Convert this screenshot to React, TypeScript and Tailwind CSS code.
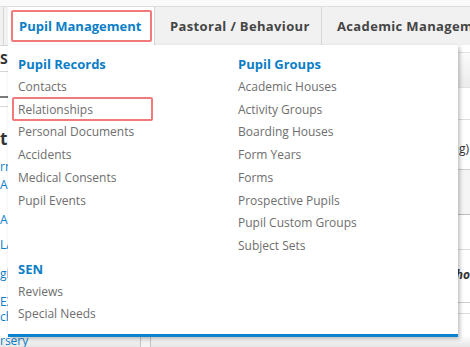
import React from "react";

const recordsMenu = [
  {
    title: "Pupil Records",
    items: ["Contacts", "Relationships", "Personal Documents", "Accidents", "Medical Consents", "Pupil Events"],
  },
  {
    title: "Pupil Groups",
    items: [
      "Academic Houses",
      "Activity Groups",
      "Boarding Houses",
      "Form Years",
      "Forms",
      "Prospective Pupils",
      "Pupil Custom Groups",
      "Subject Sets",
    ],
  },
  { title: "SEN", items: ["Reviews", "Special Needs"] },
];

export default function App() {
  return (
    <div className="relative w-[470px] h-[347px] overflow-hidden bg-white font-['Open_Sans',sans-serif]">
      {/* top strip */}
      <div className="h-[7px] bg-[#fafafa] border-b border-[#dedede]" />

      {/* tab bar */}
      <div className="flex h-[38px] bg-[#f1f1f1] pl-[3px]">
        <div className="shrink-0 w-[5px] border-l border-[#d6d6d6]" />
        <div className="shrink-0 flex items-center w-[147px] bg-white border-r border-[#d6d6d6] pl-[11px] pt-[2px] text-[13px] font-bold text-[#0b7ec6]">
          Pupil Management
        </div>
        <div className="shrink-0 flex items-center w-[167px] border-r border-[#d6d6d6] pl-[15px] pt-[2px] text-[13px] font-bold tracking-[0.35px] text-[#454545]">
          Pastoral / Behaviour
        </div>
        <div className="shrink-0 flex items-center pl-[15px] pt-[2px] whitespace-nowrap text-[13px] font-bold tracking-[0.35px] text-[#454545]">
          Academic Management
        </div>
      </div>

      {/* page content behind the menu */}
      <div className="flex h-[292px]">
        <div className="shrink-0 w-[141px] border-r border-[#d0d0d0]">
          <div className="h-[27px] border-t border-[#d6d6d6] border-b border-[#cfcfcf] flex items-center text-[14px] font-bold text-[#333]">
            S
          </div>
          <div className="h-[26px] border-b-2 border-[#7a7a7a]" />
          <div className="h-[9px] border-b border-[#d8d8d8]" />
          <div className="h-[22px] mt-[21px] leading-[22px] text-[17px] font-bold text-[#333]">t</div>
          <div className="h-[16px] mt-[9px] leading-4 text-[12px] text-[#0b7ec6]">rn</div>
          <div className="h-[16px] mt-[2px] leading-4 text-[12px] text-[#0b7ec6]">A</div>
          <div className="h-[16px] mt-[19px] leading-4 text-[12px] text-[#0b7ec6]">A</div>
          <div className="h-[16px] mt-[9px] leading-4 text-[12px] text-[#0b7ec6]">LA</div>
          <div className="h-[16px] mt-[13px] leading-4 text-[12px] text-[#0b7ec6]">gi</div>
          <div className="mt-[12px] leading-[15px] text-[12px] text-[#0b7ec6]">
            <div>EX</div>
            <div>ch</div>
          </div>
        </div>
        <div className="flex-1 ml-[10px] border-l border-[#d0d0d0]">
          <div className="h-[7px]" />
          <div className="h-[36px] border-t border-[#e2e2e2] border-b border-[#c8c8c8] bg-gradient-to-b from-[#fbfbfb] to-[#ececec]" />
          <div className="h-[32px] border-b border-[#dedede]" />
          <div className="h-[50px] border-b border-[#cfcfcf] flex items-end pb-[11px] justify-end pr-[1px] text-[12px] text-[#333]">
            ing)
          </div>
          <div className="h-[45px] border-b border-[#bdbdbd] bg-[#f5f5f5]" />
          <div className="h-[35px] border-b border-[#dedede]" />
          <div className="h-[53px] border-b border-[#cfcfcf] flex items-center justify-end pb-[2px] text-[12px] font-bold italic text-[#333]">
            Scho
          </div>
          <div className="h-[11px] border-b border-[#dedede]" />
        </div>
      </div>

      {/* bottom bar */}
      <div className="flex h-[10px] bg-gradient-to-b from-[#fbfbfb] to-[#e6e6e6]">
        <div className="w-[141px] border-r border-[#c4c4c4] -mt-[2px] leading-[12px] text-[12px] text-[#0b7ec6]">rsery</div>
        <div className="w-[10px] border-r border-[#c4c4c4] bg-[#f3f3f3]" />
      </div>

      {/* dropdown menu */}
      <div className="absolute left-[8px] top-[45px] w-[450px] h-[292px] bg-white border-b-[3px] border-[#0a84d0] shadow-[2px_2px_4px_rgba(0,0,0,0.25)] pt-[8px] pl-[10px]">
        <div className="grid grid-cols-[220px_220px]">
          {recordsMenu.map((group) => (
            <div key={group.title} className="leading-[22.75px]">
              <div className="text-[13px] font-bold text-[#0b7ec6]">{group.title}</div>
              {group.items.map((item) => (
                <div key={item} className="text-[12px] text-[#6e6e6e]">
                  {item}
                </div>
              ))}
            </div>
          ))}
        </div>
      </div>

      {/* highlight annotations */}
      <div className="absolute left-[11px] top-[10px] w-[141px] h-[32px] border-2 border-[#f27a7a] rounded-[2px]" />
      <div className="absolute left-[12px] top-[97px] w-[141px] h-[24px] border-2 border-[#f27a7a] rounded-[2px]" />
    </div>
  );
}
